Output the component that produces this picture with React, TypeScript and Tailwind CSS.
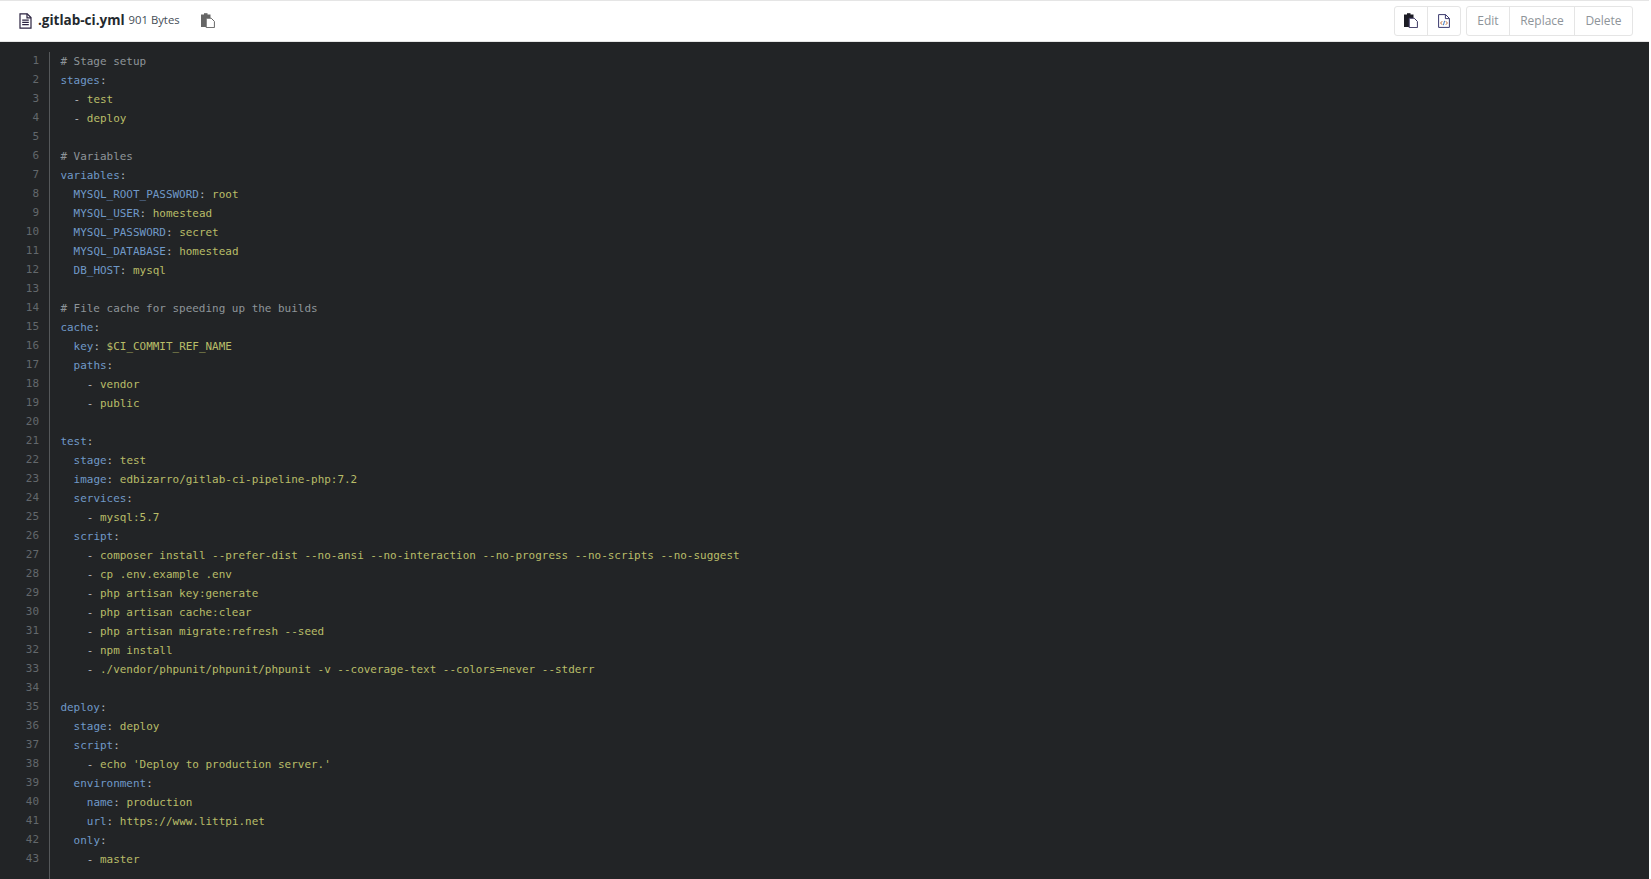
import React from 'react';

type Token = { t: string; c: 'k' | 's' | 'c' | 'p' };

const k = (t: string): Token => ({ t, c: 'k' });
const s = (t: string): Token => ({ t, c: 's' });
const p = (t: string): Token => ({ t, c: 'p' });
const c = (t: string): Token => ({ t, c: 'c' });

const colors = {
  k: 'text-[#7099c8]',
  s: 'text-[#b9bd68]',
  c: 'text-[#8e9499]',
  p: 'text-[#b4b8bc]',
};

const pair = (indent: string, key: string, val?: string): Token[] => [
  p(indent),
  k(key),
  p(':'),
  ...(val ? [p(' '), s(val)] : []),
];
const item = (indent: string, val: string): Token[] => [p(indent + '- '), s(val)];

const lines: Token[][] = [
  [c('# Stage setup')],
  pair('', 'stages'),
  item('  ', 'test'),
  item('  ', 'deploy'),
  [],
  [c('# Variables')],
  pair('', 'variables'),
  pair('  ', 'MYSQL_ROOT_PASSWORD', 'root'),
  pair('  ', 'MYSQL_USER', 'homestead'),
  pair('  ', 'MYSQL_PASSWORD', 'secret'),
  pair('  ', 'MYSQL_DATABASE', 'homestead'),
  pair('  ', 'DB_HOST', 'mysql'),
  [],
  [c('# File cache for speeding up the builds')],
  pair('', 'cache'),
  pair('  ', 'key', '$CI_COMMIT_REF_NAME'),
  pair('  ', 'paths'),
  item('    ', 'vendor'),
  item('    ', 'public'),
  [],
  pair('', 'test'),
  pair('  ', 'stage', 'test'),
  pair('  ', 'image', 'edbizarro/gitlab-ci-pipeline-php:7.2'),
  pair('  ', 'services'),
  item('    ', 'mysql:5.7'),
  pair('  ', 'script'),
  item('    ', 'composer install --prefer-dist --no-ansi --no-interaction --no-progress --no-scripts --no-suggest'),
  item('    ', 'cp .env.example .env'),
  item('    ', 'php artisan key:generate'),
  item('    ', 'php artisan cache:clear'),
  item('    ', 'php artisan migrate:refresh --seed'),
  item('    ', 'npm install'),
  item('    ', './vendor/phpunit/phpunit/phpunit -v --coverage-text --colors=never --stderr'),
  [],
  pair('', 'deploy'),
  pair('  ', 'stage', 'deploy'),
  pair('  ', 'script'),
  item('    ', "echo 'Deploy to production server.'"),
  pair('  ', 'environment'),
  pair('    ', 'name', 'production'),
  pair('    ', 'url', 'https://www.littpi.net'),
  pair('  ', 'only'),
  item('    ', 'master'),
];

function FileIcon() {
  return (
    <svg width="13" height="16" viewBox="0 0 13 16" fill="none" stroke="#2b2340" strokeWidth="1.2">
      <path d="M1 .8h7.2L12 4.6v10.6H1z" />
      <path d="M8 .8v4h4" />
      <path d="M3.2 7.2h6.6M3.2 9.4h6.6M3.2 11.6h6.6" />
    </svg>
  );
}

function CopyIcon({ dark }: { dark?: boolean }) {
  return (
    <svg width="14" height="15" viewBox="0 0 14 15">
      <path d="M0 1.5h9.5V14H0z" fill={dark ? '#1c1c24' : '#666'} />
      <path d="M3 .2h3.5v2.4H3z" fill={dark ? '#1c1c24' : '#666'} />
      <path d="M5.2 5.2h5l3.2 3.2v6.2H5.2z" fill="#fff" stroke={dark ? '#3a3560' : '#666'} strokeWidth="1" />
    </svg>
  );
}

function CodeFileIcon() {
  return (
    <svg width="12" height="14" viewBox="0 0 12 14" fill="none" stroke="#3b3a6e" strokeWidth="1">
      <path d="M.6.6h7l3.8 3.8v9H.6z" />
      <path d="M7.4.6v4h4" />
      <path d="M4.2 7.2 2.6 9l1.6 1.8M7.8 7.2 9.4 9l-1.6 1.8" stroke="#c2703c" />
      <path d="M6.6 6.8 5.4 11.2" stroke="#3a78c2" />
    </svg>
  );
}

export default function App() {
  return (
    <div className="h-[879px] overflow-hidden bg-white pr-[2px] font-['Open_Sans',sans-serif]">
      <div className="flex h-[42px] items-center justify-between border-y border-[#e5e5e5] bg-white pr-[16px] pb-[1px]">
        <div className="flex items-center pl-[19px]">
          <FileIcon />
          <span className="ml-[6px] text-[13.5px] font-bold text-[#24292e]">.gitlab-ci.yml</span>
          <span className="ml-[4px] text-[11.3px] text-[#444d56]">901 Bytes</span>
          <span className="ml-[21px] flex"><CopyIcon /></span>
        </div>
        <div className="flex items-center gap-[5px]">
          <div className="flex h-[30px] rounded-[3px] border border-[#e5e5e5]">
            <div className="flex w-[33px] items-center justify-center border-r border-[#e5e5e5]"><CopyIcon dark /></div>
            <div className="flex w-[32px] items-center justify-center"><CodeFileIcon /></div>
          </div>
          <div className="flex h-[30px] rounded-[3px] border border-[#e5e5e5] text-[12px] text-[#8e9499]">
            <div className="flex w-[43px] items-center justify-center border-r border-[#e5e5e5]">Edit</div>
            <div className="flex w-[65px] items-center justify-center border-r border-[#e5e5e5]">Replace</div>
            <div className="flex w-[57px] items-center justify-center">Delete</div>
          </div>
        </div>
      </div>
      <div className="flex h-[837px] bg-[#222426] pt-[10px] font-['DejaVu_Sans_Mono',monospace] text-[10.96px] leading-[19px]">
        <div className="w-[50px] shrink-0 border-r border-[#55585a] pr-[10px] text-right text-[#63686c]">
          <div className="-mt-[1px]">
            {lines.map((_, i) => (
              <div key={i} className="h-[19px]">{i + 1}</div>
            ))}
          </div>
        </div>
        <div className="pl-[10.4px] whitespace-pre">
          {lines.map((line, i) => (
            <div key={i} className="h-[19px]">
              {line.map((tok, j) => (
                <span key={j} className={colors[tok.c]}>{tok.t}</span>
              ))}
            </div>
          ))}
        </div>
      </div>
    </div>
  );
}
